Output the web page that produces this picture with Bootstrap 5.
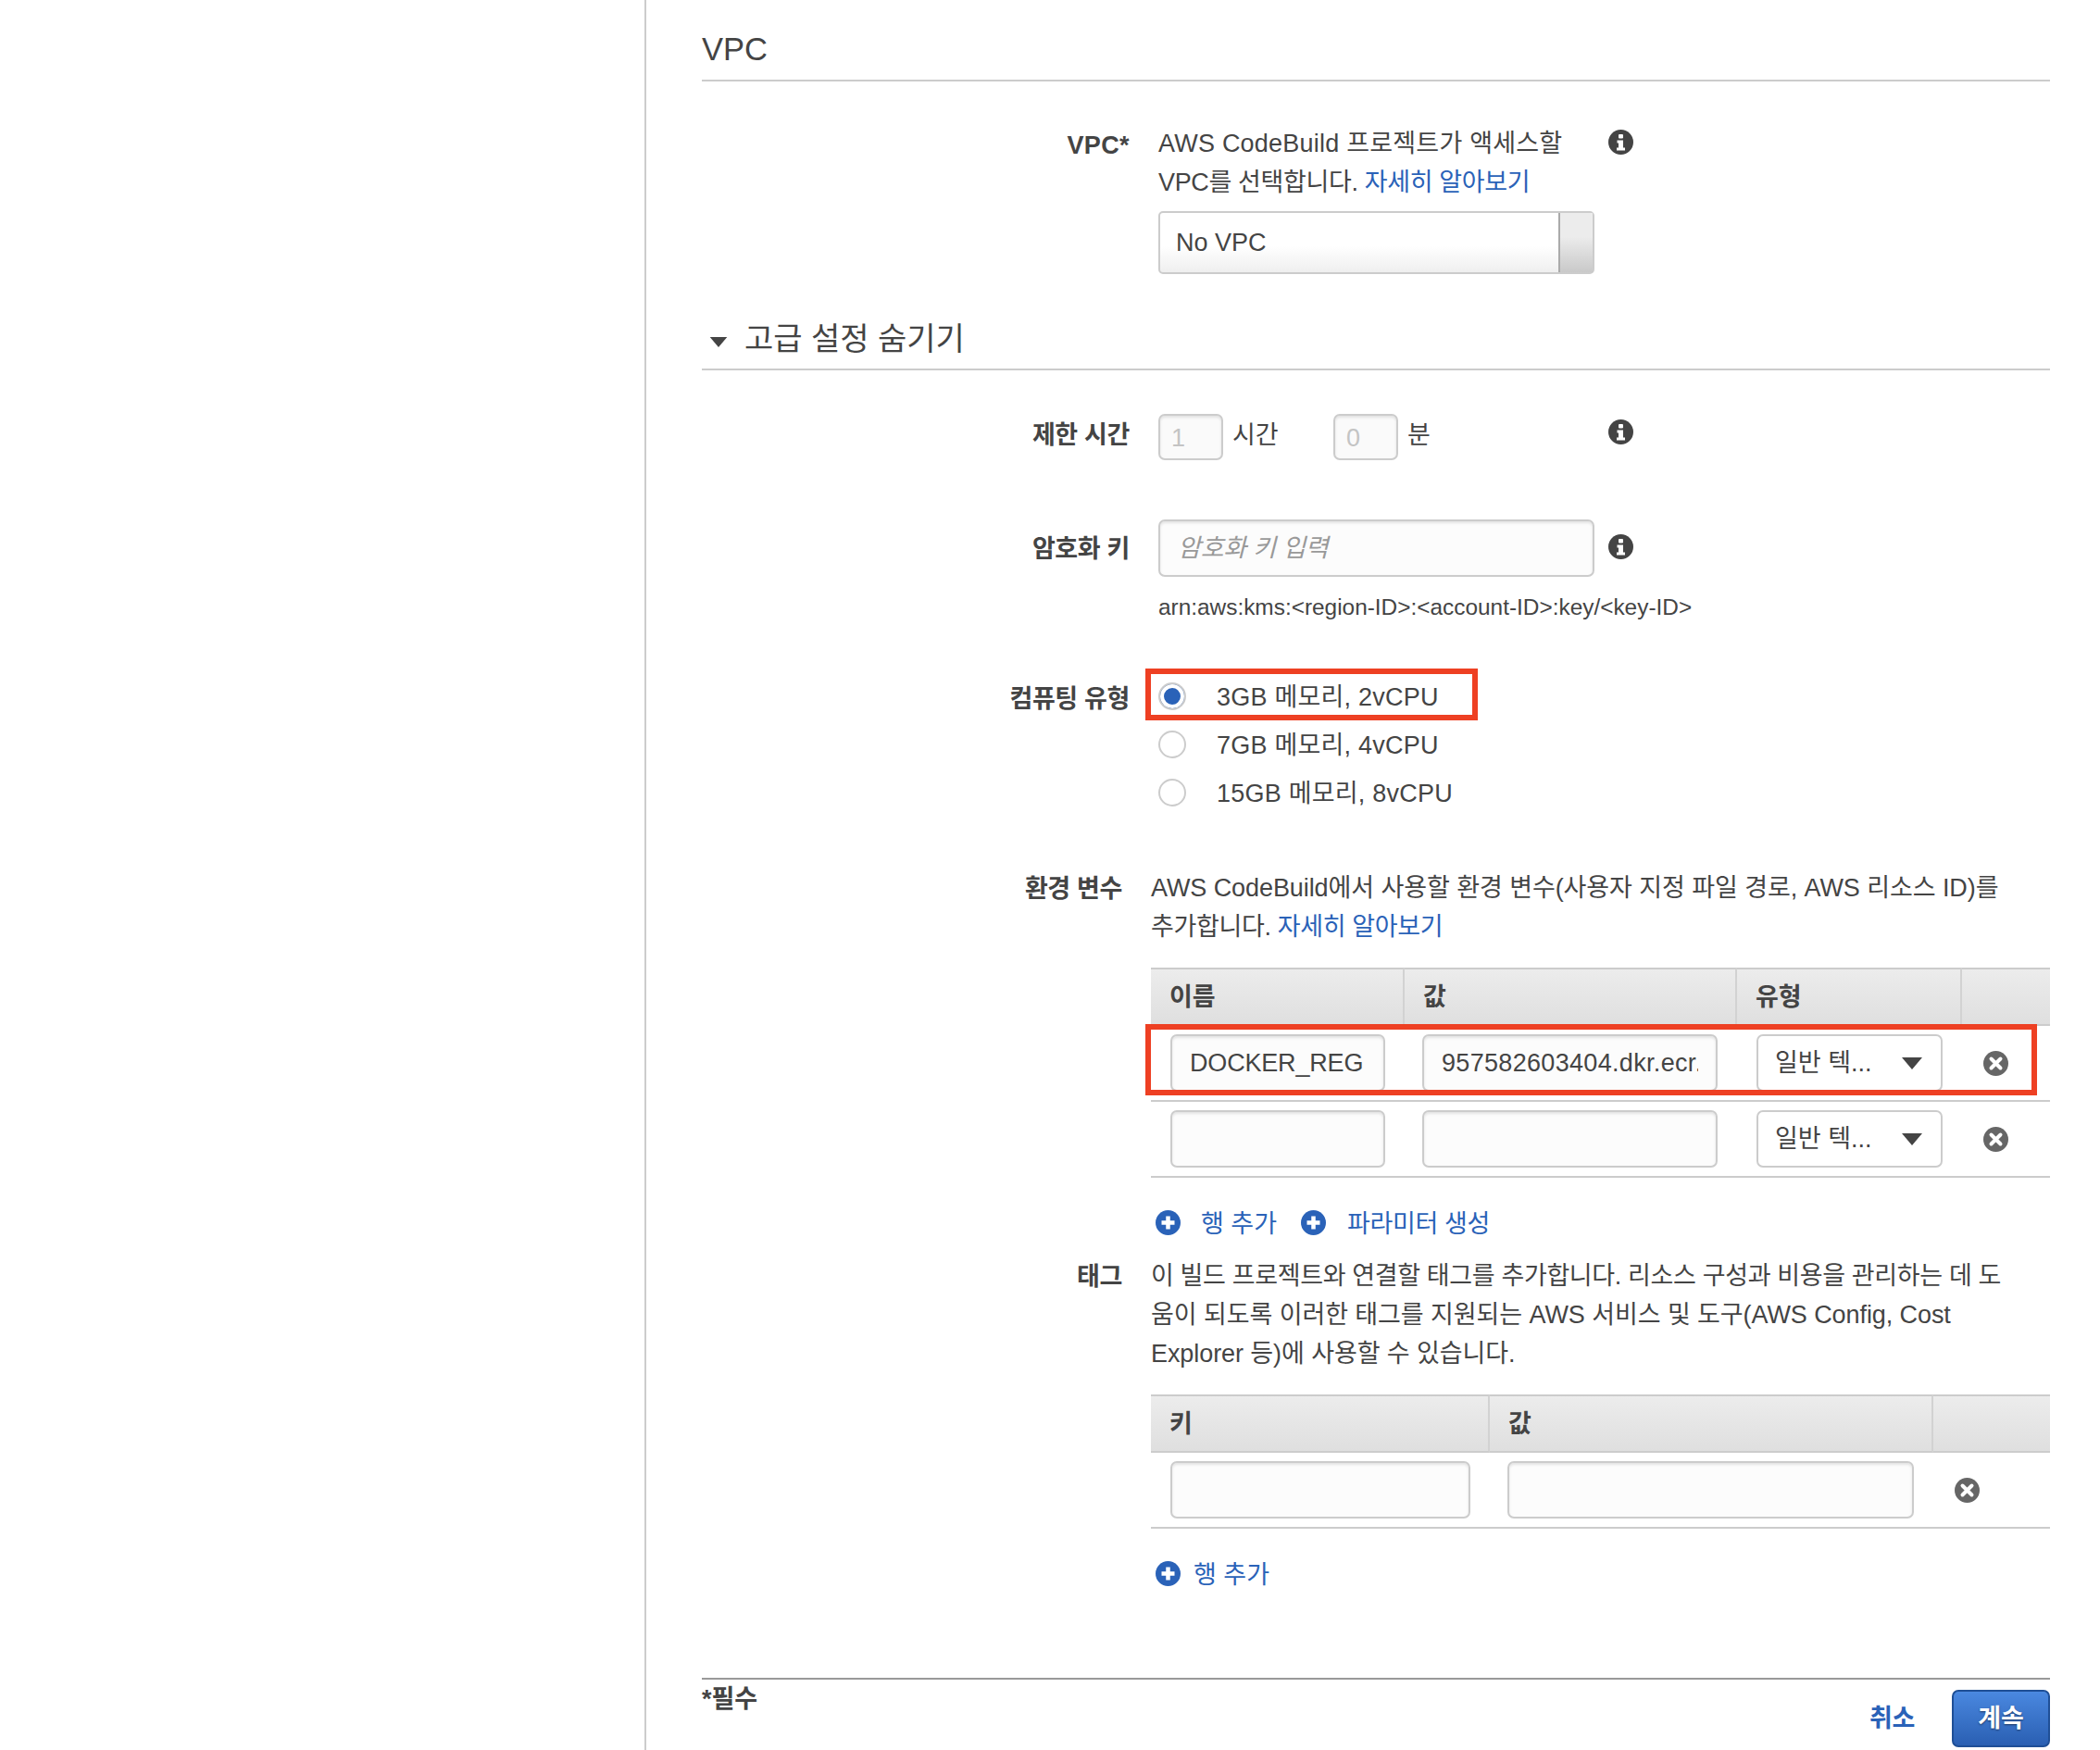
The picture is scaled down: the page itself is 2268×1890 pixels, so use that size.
<!DOCTYPE html>
<html lang="ko">
<head>
    <meta charset="UTF-8">
    <meta name="viewport" content="width=device-width, initial-scale=1.0">
    <title>CodeBuild 프로젝트 구성</title>
    <link href="https://cdn.jsdelivr.net/npm/bootstrap@5.3.0/dist/css/bootstrap.min.css" rel="stylesheet">
    <style>
      body {
          font-family: "Liberation Sans", "Noto Sans CJK KR", sans-serif;
          font-size: 27px;
          line-height: 42px;
          color: #444;
          background: #fff;
      }
      a { color: #2a62b8; text-decoration: none; }
      .tight-ko { letter-spacing: -.36px; }
      .tight-min { letter-spacing: -.08px; }
      .wide-min { letter-spacing: .22px; }
      .side-pane { width: 698px; flex: none; border-right: 2px solid #ccc; min-height: 1890px; }
      .main-pane { width: 1456px; margin-left: 60px; flex: none; }

      .sec-head {
          font-size: 34.5px;
          font-weight: 400;
          line-height: 42px;
          margin: 0;
          border-bottom: 2px solid #ccc;
      }
      .sec-vpc { padding: 32px 0 12px; }
      .sec-adv { font-size: 34px; padding: 49px 0 11px; display: flex; align-items: center; }
      .tri-adv { width: 20px; height: 11px; margin: 6px 18px 0 8px; }

      .form-line { display: flex; gap: 31px; }
      .form-label-cell { width: 462px; flex: none; text-align: right; font-weight: 700; letter-spacing: -.35px; }
      .vpc-label { letter-spacing: .4px; padding-top: 2px; }
      .form-body-cell { width: 471px; flex: none; }
      .wide-label { width: 454px; flex: none; text-align: right; font-weight: 700; letter-spacing: -.35px; padding-top: 1px; }
      .wide-body { width: 971px; flex: none; }
      .info-ico { width: 27px; height: 27px; flex: none; margin-left: -16px; }

      .field-box.form-control {
          height: 62px;
          border: 2px solid #ccc;
          border-radius: 7px;
          background: #fcfcfc;
          box-shadow: inset 0 2px 3px rgba(0,0,0,.1);
          font-size: 27px;
          color: #444;
          padding: 0 19px;
      }
      .field-box.form-control::placeholder { color: #999; font-style: italic; letter-spacing: -.2px; }
      .reg-name.form-control { letter-spacing: -.18px; }
      .reg-value.form-control { letter-spacing: .32px; padding-right: 19px; }
      .time-box.form-control {
          width: 70px;
          height: 50px;
          color: #c4c4c4;
          padding: 3px 12px 0;
          background: #fafafa;
      }
      .time-unit { margin-left: 10px; padding-top: 2px; }
      .time-gap { width: 109px; flex: none; }
      .vpc-pick {
          height: 68px;
          margin-top: 10px;
          border: 2px solid #ccc;
          border-radius: 5px;
          background: linear-gradient(#fff 55%, #efefef);
          padding-left: 17px;
      }
      .vpc-pick-btn {
          width: 37px;
          height: 100%;
          border-left: 2px solid #aaa;
          background: linear-gradient(#ececec 40%, #c9c9c9);
      }

      .hint-line { font-size: 24.4px; line-height: 36px; white-space: nowrap; margin-top: 15px; }
      .radio-line { height: 52px; display: flex; align-items: center; }
      .radio-text { padding-top: 2px; }
      .radio-dot.form-check-input {
          width: 30px;
          height: 30px;
          margin: 0 33px 0 0;
          border: 2px solid #ccc;
          background-image: none;
          flex: none;
      }
      .radio-dot.form-check-input:checked {
          background-color: #2a62b8;
          border-color: #ccc;
          box-shadow: inset 0 0 0 4px #fff;
      }
      .radio-wrap { position: relative; width: 471px; }
      .mark-box { position: absolute; border: 6px solid #ee4023; pointer-events: none; }
      .mark-radio { left: -14px; top: -4px; width: 359px; height: 56px; }
      .mark-row { left: -6px; top: 61px; width: 963px; height: 77px; }

      .grid-wrap { position: relative; }
      .env-grid { width: 971px; table-layout: fixed; border-collapse: separate; border-spacing: 0; margin: 0; }
      .env-grid th {
          height: 63px;
          padding: 0 0 0 20px;
          font-size: 27px;
          font-weight: 700;
          vertical-align: middle;
          color: #444;
          border-top: 2px solid #ccc;
          border-bottom: 2px solid #ccc;
          border-right: 2px solid #d2d2d2;
          background: linear-gradient(#ececec, #dfdfdf);
      }
      .env-grid th:last-child { border-right: 0; }
      .env-grid td {
          padding: 9px 21px;
          border-bottom: 2px solid #ccc;
          vertical-align: middle;
          background: #fff;
      }
      .env-grid td:nth-child(2) { padding-left: 19px; }
      .env-grid td:last-child { padding-left: 23px; }
      .type-pick {
          height: 62px;
          border: 2px solid #ccc;
          border-radius: 7px;
          padding: 0 20px 0 18px;
          background: #fff;
          white-space: nowrap;
      }
      .tri-pick { width: 22px; height: 13px; }
      .del-ico { width: 27px; height: 27px; display: block; }
      .add-ico { width: 27px; height: 27px; margin-top: 6px; flex: none; }
      .add-line { margin-left: 5px; white-space: nowrap; }

      .foot-line { border-top: 2px solid #999; margin-top: 90px; }
      .foot-actions { padding-top: 11px; }
      .cancel-link { font-weight: 700; margin-right: 16px; font-size: 27px; color: #2a62b8; letter-spacing: -.3px; }
      .go-btn.btn {
          width: 106px;
          height: 62px;
          padding: 0;
          font-size: 27px;
          font-weight: 700;
          border: 2px solid #1f4f96;
          border-radius: 7px;
          background: linear-gradient(#4a88e0, #2a5fb2);
          text-shadow: 0 1px 2px rgba(0,0,0,.5);
      }
    </style>
</head>
<body>
    <svg width="0" height="0" class="position-absolute">
        <symbol id="i-info" viewBox="0 0 27 27">
            <circle cx="13.5" cy="13.5" r="13.5" fill="#444"/>
            <rect x="11" y="5" width="5" height="4.5" rx="1" fill="#fff"/>
            <path d="M9.5 11.5h6.5v8h2v3h-9v-3h2v-5h-1.500z" fill="#fff"/>
        </symbol>
        <symbol id="i-del" viewBox="0 0 27 27">
            <circle cx="13.5" cy="13.500" r="13.5" fill="#666"/>
            <path d="M8.500 8.500l10 10m0-10l-10 10" stroke="#fff" stroke-width="4" stroke-linecap="round"/>
        </symbol>
        <symbol id="i-add" viewBox="0 0 27 27">
            <circle cx="13.5" cy="13.5" r="13.5" fill="#2a62b8"/>
            <path d="M13.500 6.500v14m-7-7h14" stroke="#fff" stroke-width="4.500"/>
        </symbol>
        <symbol id="i-tri" viewBox="0 0 22 13">
            <path d="M0 0h22L11 13z" fill="#444"/>
        </symbol>
    </svg>

    <div class="d-flex">
        <div class="side-pane"></div>
        <div class="main-pane">
            <h2 class="sec-head sec-vpc">VPC</h2>

            <div class="form-line align-items-start" style="margin-top:46px">
                <div class="form-label-cell vpc-label">VPC*</div>
                <div class="form-body-cell">
                    <span class="wide-min">AWS CodeBuild 프로젝트가 액세스할</span><br><span class="tight-ko">VPC를 선택합니다. <a href="#">자세히 알아보기</a></span>
                    <div class="vpc-pick d-flex align-items-center justify-content-between">
                        <span>No VPC</span>
                        <span class="vpc-pick-btn"></span>
                    </div>
                </div>
                <svg class="info-ico" style="margin-top:6px"><use href="#i-info"/></svg>
            </div>

            <h2 class="sec-head sec-adv">
                <svg class="tri-adv"><use href="#i-tri"/></svg>고급 설정 숨기기
            </h2>

            <div class="form-line" style="margin-top:47px">
                <div class="form-label-cell" style="padding-top:2px">제한 시간</div>
                <div class="form-body-cell d-flex align-items-start">
                    <input class="form-control field-box time-box" value="1" disabled>
                    <span class="time-unit time-gap">시간</span>
                    <input class="form-control field-box time-box" value="0" disabled>
                    <span class="time-unit">분</span>
                </div>
                <svg class="info-ico" style="margin-top:6px"><use href="#i-info"/></svg>
            </div>

            <div class="form-line" style="margin-top:64px">
                <div class="form-label-cell" style="padding-top:11px">암호화 키</div>
                <div class="form-body-cell">
                    <input class="form-control field-box" placeholder="암호화 키 입력">
                    <div class="hint-line">arn:aws:kms:&lt;region-ID&gt;:&lt;account-ID&gt;:key/&lt;key-ID&gt;</div>
                </div>
                <svg class="info-ico" style="margin-top:16px"><use href="#i-info"/></svg>
            </div>

            <div class="form-line" style="margin-top:52px">
                <div class="form-label-cell" style="padding-top:8px">컴퓨팅 유형</div>
                <div class="radio-wrap">
                    <div class="radio-line">
                        <input class="form-check-input radio-dot" type="radio" name="compute" checked>
                        <span class="radio-text wide-min">3GB 메모리, 2vCPU</span>
                    </div>
                    <div class="radio-line">
                        <input class="form-check-input radio-dot" type="radio" name="compute">
                        <span class="radio-text wide-min">7GB 메모리, 4vCPU</span>
                    </div>
                    <div class="radio-line">
                        <input class="form-check-input radio-dot" type="radio" name="compute">
                        <span class="radio-text wide-min">15GB 메모리, 8vCPU</span>
                    </div>
                    <div class="mark-box mark-radio"></div>
                </div>
            </div>

            <div class="form-line" style="margin-top:56px">
                <div class="wide-label">환경 변수</div>
                <div class="wide-body">
                    <div><span class="tight-min">AWS CodeBuild에서 사용할 환경 변수(사용자 지정 파일 경로, AWS 리소스 ID)를</span><br><span class="tight-ko">추가합니다. <a href="#">자세히 알아보기</a></span></div>
                    <div class="grid-wrap" style="margin-top:23px">
                        <table class="env-grid">
                            <colgroup><col style="width:274px"><col style="width:359px"><col style="width:243px"><col></colgroup>
                            <thead><tr><th>이름</th><th>값</th><th>유형</th><th></th></tr></thead>
                            <tbody>
                                <tr>
                                    <td><input class="form-control field-box reg-name" value="DOCKER_REG"></td>
                                    <td><input class="form-control field-box reg-value" value="957582603404.dkr.ecr.ap-northeast-2"></td>
                                    <td><div class="type-pick d-flex align-items-center justify-content-between"><span>일반 텍...</span><svg class="tri-pick"><use href="#i-tri"/></svg></div></td>
                                    <td><svg class="del-ico"><use href="#i-del"/></svg></td>
                                </tr>
                                <tr>
                                    <td><input class="form-control field-box"></td>
                                    <td><input class="form-control field-box"></td>
                                    <td><div class="type-pick d-flex align-items-center justify-content-between"><span>일반 텍...</span><svg class="tri-pick"><use href="#i-tri"/></svg></div></td>
                                    <td><svg class="del-ico"><use href="#i-del"/></svg></td>
                                </tr>
                            </tbody>
                        </table>
                        <div class="mark-box mark-row"></div>
                    </div>
                    <div class="add-line d-flex" style="margin-top:29px">
                        <svg class="add-ico"><use href="#i-add"/></svg>
                        <a href="#" style="margin-left:22px">행 추가</a>
                        <svg class="add-ico" style="margin-left:26px"><use href="#i-add"/></svg>
                        <a href="#" class="tight-ko" style="margin-left:23px">파라미터 생성</a>
                    </div>
                </div>
            </div>

            <div class="form-line" style="margin-top:14px">
                <div class="wide-label">태그</div>
                <div class="wide-body">
                    <div><span class="tight-ko">이 빌드 프로젝트와 연결할 태그를 추가합니다. 리소스 구성과 비용을 관리하는 데 도</span><br><span class="tight-min">움이 되도록 이러한 태그를 지원되는 AWS 서비스 및 도구(AWS Config, Cost</span><br><span class="tight-min">Explorer 등)에 사용할 수 있습니다.</span></div>
                    <div style="margin-top:23px">
                        <table class="env-grid">
                            <colgroup><col style="width:366px"><col style="width:479px"><col></colgroup>
                            <thead><tr><th>키</th><th>값</th><th></th></tr></thead>
                            <tbody>
                                <tr>
                                    <td><input class="form-control field-box"></td>
                                    <td><input class="form-control field-box"></td>
                                    <td><svg class="del-ico"><use href="#i-del"/></svg></td>
                                </tr>
                            </tbody>
                        </table>
                    </div>
                    <div class="add-line d-flex" style="margin-top:29px">
                        <svg class="add-ico"><use href="#i-add"/></svg>
                        <a href="#" style="margin-left:14px">행 추가</a>
                    </div>
                </div>
            </div>

            <div class="foot-line d-flex justify-content-between align-items-start">
                <div class="fw-bold">*필수</div>
                <div class="d-flex align-items-center gap-4 foot-actions">
                    <a href="#" class="cancel-link">취소</a>
                    <button type="button" class="btn btn-primary go-btn">계속</button>
                </div>
            </div>
        </div>
    </div>

    <script src="https://cdn.jsdelivr.net/npm/bootstrap@5.3.0/dist/js/bootstrap.bundle.min.js"></script>
</body>
</html>
